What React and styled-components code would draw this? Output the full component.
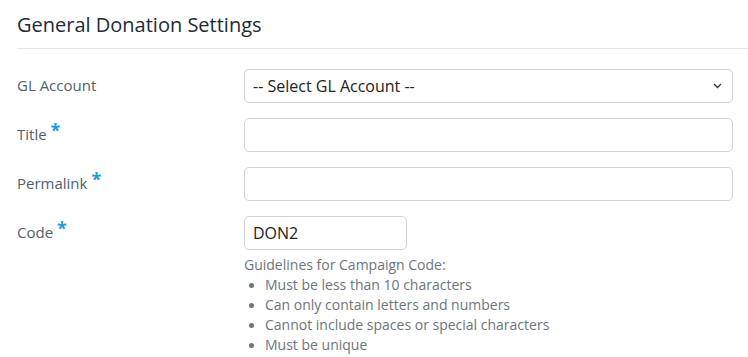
import styled, { createGlobalStyle } from "styled-components";

const Global = createGlobalStyle`
  body {
    margin: 0;
    background: #fff;
    font-family: "Open Sans", "Liberation Sans", sans-serif;
  }
`;

const Page = styled.div`
  padding: 0 15px 0 17px;
`;

const Heading = styled.h2`
  margin: 0;
  padding: 11px 0 10px;
  font-size: 20px;
  font-weight: 400;
  color: #1f2a37;
  border-bottom: 1px solid #e3e5e8;
  margin-right: -15px;
`;

const Form = styled.div`
  display: flex;
  flex-direction: column;
  gap: 15px;
  padding-top: 20px;
`;

const Row = styled.div`
  display: grid;
  grid-template-columns: 227px 1fr;
  align-items: start;
`;

const Label = styled.label`
  font-size: 15px;
  color: #52606d;
  line-height: 32px;
  height: 34px;
`;

const Star = styled.span`
  color: #1b9be0;
  font-size: 18px;
  font-weight: 700;
  line-height: 0;
  position: relative;
  top: -3px;
  margin-left: 4px;
`;

const Field = styled.div`
  display: flex;
  flex-direction: column;
`;

const Input = styled.div`
  box-sizing: border-box;
  height: 34px;
  width: ${(p) => p.$width || "100%"};
  border: 1px solid #cfd3d7;
  border-radius: 5px;
  padding: 0 8px;
  display: flex;
  align-items: center;
  justify-content: space-between;
  font-size: 16px;
  color: #222;
`;

const Guide = styled.div`
  margin-top: 5px;
  font-size: 14px;
  line-height: 20px;
  color: #6c757d;
`;

const List = styled.ul`
  margin: 0;
  padding: 0 0 0 21px;
  li::marker {
    font-size: 13px;
  }
`;

const Chevron = () => (
  <svg width="9" height="6" viewBox="0 0 9 6">
    <path d="M1 1l3.5 3.5L8 1" fill="none" stroke="#333" strokeWidth="1.3" />
  </svg>
);

export default function App() {
  return (
    <Page>
      <Global />
      <Heading>General Donation Settings</Heading>
      <Form>
        <Row>
          <Label>GL Account</Label>
          <Input>
            <span>-- Select GL Account --</span>
            <span style={{ marginRight: 2, display: "flex" }}>
              <Chevron />
            </span>
          </Input>
        </Row>
        <Row>
          <Label>
            Title<Star>*</Star>
          </Label>
          <Input />
        </Row>
        <Row>
          <Label>
            Permalink<Star>*</Star>
          </Label>
          <Input />
        </Row>
        <Row>
          <Label>
            Code<Star>*</Star>
          </Label>
          <Field>
            <Input $width="163px">DON2</Input>
            <Guide>
              Guidelines for Campaign Code:
              <List>
                <li>Must be less than 10 characters</li>
                <li>Can only contain letters and numbers</li>
                <li>Cannot include spaces or special characters</li>
                <li>Must be unique</li>
              </List>
            </Guide>
          </Field>
        </Row>
      </Form>
    </Page>
  );
}
